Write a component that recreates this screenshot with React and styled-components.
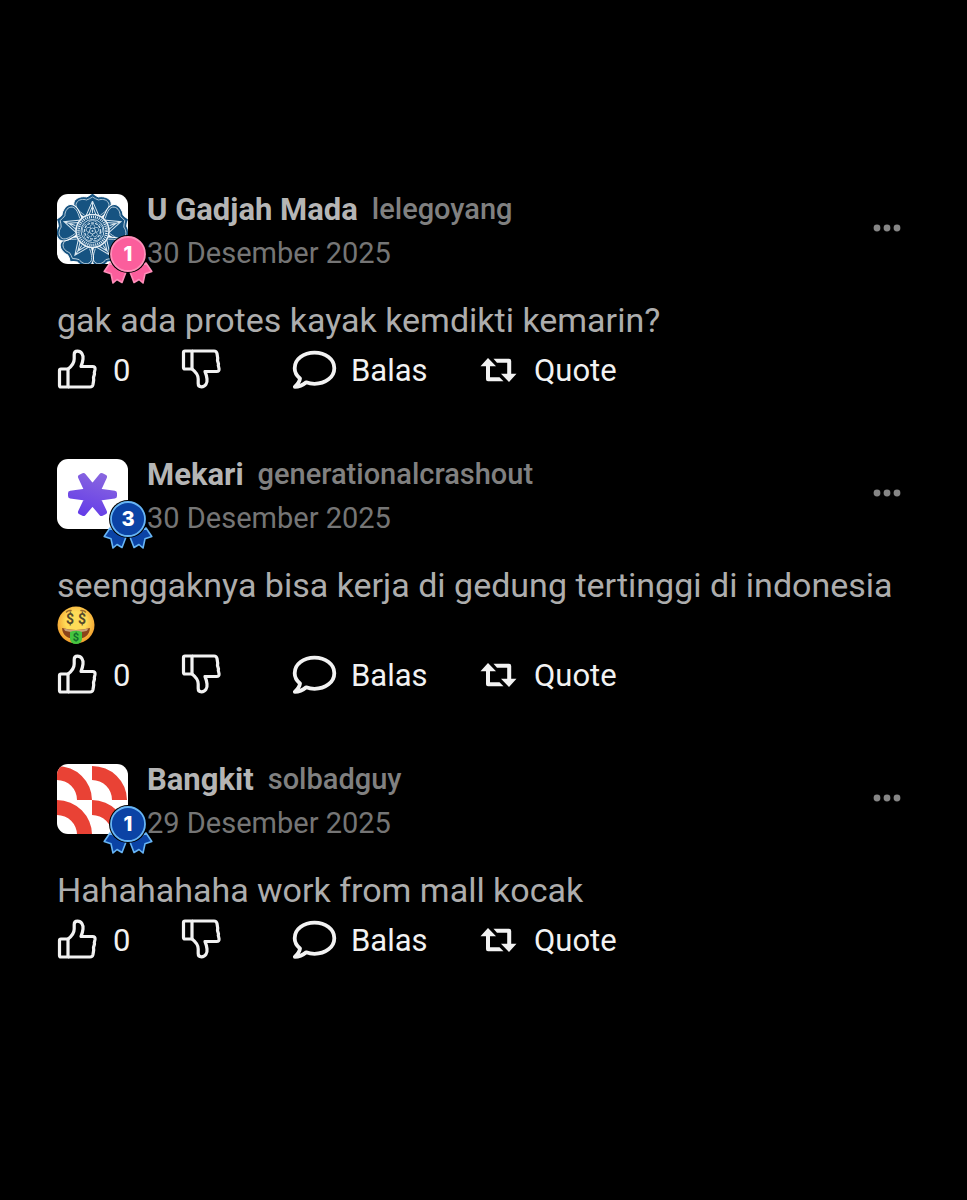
import React from 'react';
import styled, { createGlobalStyle } from 'styled-components';

const GlobalStyle = createGlobalStyle`
  * {
    box-sizing: border-box;
  }
  body {
    margin: 0;
    background: #000;
    font-family: Roboto, 'Noto Sans', sans-serif;
  }
`;

const Page = styled.main`
  min-height: 100vh;
  padding: 194px 57px 60px;
  background: #000;
`;

const Post = styled.article`
  margin-bottom: 58px;
`;

const Header = styled.header`
  display: flex;
  height: 70px;
  margin-bottom: 36px;
`;

const AvatarBox = styled.div`
  position: relative;
  width: 71px;
  height: 70px;
  flex-shrink: 0;
  margin-right: 19px;
`;

const AvatarFrame = styled.div`
  width: 71px;
  height: 70px;
  overflow: hidden;
  border-radius: 11px;
  background: #fff;

  svg {
    display: block;
  }
`;

const BadgeBox = styled.div`
  position: absolute;
  left: 46px;
  top: 41px;
  width: 50px;
  height: 50px;

  svg {
    display: block;
  }
`;

const BadgeNumber = styled.span`
  position: absolute;
  top: 0;
  left: 0;
  width: 50px;
  line-height: 38px;
  text-align: center;
  color: #fff;
  font-family: Inter, sans-serif;
  font-size: 20px;
  font-weight: 800;
`;

const Meta = styled.div`
  flex: 1;
  min-width: 0;
`;

const Names = styled.div`
  display: flex;
  gap: 14px;
  line-height: 32px;
  margin-bottom: 11px;
`;

const Company = styled.strong`
  color: #b5b5b5;
  font-size: 31px;
  font-weight: 700;
`;

const Username = styled.span`
  color: #808080;
  font-size: 29px;
  font-weight: 500;
  line-height: 30px;
`;

const PostDate = styled.time`
  display: block;
  color: #757575;
  font-size: 29px;
  line-height: 32px;
`;

const MoreButton = styled.button`
  align-self: center;
  display: flex;
  padding: 8px 9px 10px;
  border: 0;
  background: none;
  cursor: pointer;
`;

const Body = styled.p`
  margin: 0;
  color: #adadad;
  font-size: 34px;
  line-height: 40px;

  svg {
    display: block;
  }
`;

const Actions = styled.div`
  display: grid;
  grid-template-columns: 124px 111px 188px auto;
  justify-content: start;
  height: 61px;
`;

const ActionButton = styled.button`
  display: flex;
  align-items: center;
  gap: 16px;
  padding: 0;
  border: 0;
  background: none;
  color: #f2f2f2;
  font-family: inherit;
  font-size: 31px;
  line-height: 40px;
  cursor: pointer;
`;

const ThumbIcon = ({ down }) => (
  <svg width="40" height="40" viewBox="0 0 40 40" overflow="visible" fill="none" stroke="#f2f2f2" strokeWidth="3.200" strokeLinejoin="round" aria-hidden="true">
    <g transform={down ? 'matrix(1 0 0 -1 0 38)' : 'translate(0 -2)'}>
      <path d="M4 20H11V38H4Q2.500 38 2.500 36.500V21.500Q2.500 20 4 20Z" />
      <path d="M11 20C15 17 17.200 14 17.200 10V5.500Q17.200 2.200 20.500 2.200C24.500 2.200 26.500 6 26 10Q25.500 14 24 17.500H35.500Q38.500 17.500 38 20.500L37.300 23.500L37.500 25L36.500 28.500L36.700 31L36 35.500Q35.500 38 33 38H11" />
    </g>
  </svg>
);

const ReplyIcon = () => (
  <svg width="43" height="40" viewBox="0 1 43 40" overflow="visible" fill="none" stroke="#f2f2f2" strokeWidth="3.800" strokeLinejoin="round" aria-hidden="true">
    <path d="M8 28.500C4.500 25.500 2.700 22 2.700 18.200C2.700 9.300 11.500 2.700 22.500 2.700S42.300 9.300 42.300 18.200S33.500 33.800 22.500 33.800Q18 33.800 14.200 32.300Q9 36.800 2.800 36.800Q7.500 32.500 8 28.500Z" />
  </svg>
);

const QuoteIcon = () => (
  <svg width="38" height="25" viewBox="1 0 38 25" fill="#f2f2f2" aria-hidden="true">
    <path d="M9 0L17 8.300H11V19.300H20.500L24.500 23.300H9Q7 23.300 7 21.300V8.300H1.500Z" />
    <path d="M14.500 .8H30Q32.200 .8 32.200 3V15.800H37.500L30 24L22 15.800H28.200V4.700H18Z" />
  </svg>
);

const MoneyFace = () => (
  <svg width="38" height="40" viewBox="0 0 38 40" role="img" aria-label="🤑">
    <defs>
      <radialGradient id="face" cx="50%" cy="42%" r="55%">
        <stop offset="0.500" stopColor="#ffdc58" />
        <stop offset="1" stopColor="#f3a02f" />
      </radialGradient>
    </defs>
    <circle cx="19" cy="20" r="18.500" fill="url(#face)" />
    <g fill="none" stroke="#9a6a2b" strokeWidth="1.500" strokeLinecap="round">
      <path d="M9.500 7Q11.500 5 14 5.500" />
      <path d="M24 5.500Q26.500 5 28.500 7" />
    </g>
    <path d="M5 23Q19 27 33 23Q32 34 19 34Q6 34 5 23Z" fill="#8a431b" />
    <path d="M7 23.500Q19 26.500 31 23.500Q31 25 29.500 26Q19 28.500 8.500 26Q7 25 7 23.500Z" fill="#c9a178" />
    <path d="M13 27Q19 24.500 25 27V34Q24.500 39 19 39T13 34Z" fill="#45c43f" />
    <g fill="#54482b" fontFamily="Roboto, sans-serif" fontWeight="700" textAnchor="middle">
      <text x="13" y="19" fontSize="14">$</text>
      <text x="25" y="19" fontSize="14">$</text>
      <text x="19" y="36" fontSize="11" fill="#126b2b">$</text>
    </g>
  </svg>
);

const petals = [0, 72, 144, 216, 288];

const GadjahMadaLogo = () => (
  <svg width="71" height="71" viewBox="0 0 71 71" aria-hidden="true">
    <g transform="translate(35.500 37)">
      {petals.map((angle) => (
        <path key={angle} transform={`rotate(${angle + 36})`} d="M-2.500 -27L0 -32L2.500 -27L0 -20Z" fill="#165381" />
      ))}
      {petals.map((angle) => (
        <g key={angle} transform={`rotate(${angle})`}>
          <path d="M0 0L-9 -14C-15 -19 -20 -23 -18.500 -29C-17 -34 -9 -35 -6 -34Q-3 -35 0 -38Q3 -35 6 -34C9 -35 17 -34 18.500 -29C20 -23 15 -19 9 -14Z" fill="#165381" stroke="#fff" strokeWidth="1" />
          <path d="M-8 -16C-14 -20 -18 -24 -16 -28C-14 -32 -9 -32 -6 -31Q-3 -32 0 -34Q3 -32 6 -31C9 -32 14 -32 16 -28C18 -24 14 -20 8 -16" fill="none" stroke="#bcd2e0" strokeWidth=".9" />
        </g>
      ))}
      {petals.map((angle) => (
        <path key={angle} transform={`rotate(${angle})`} d="M-7 -14L0 -30L7 -14M-4 -15L0 -25L4 -15M0 -29V-18" fill="#165381" stroke="#d8e6ef" strokeWidth="1" />
      ))}
      <circle r="16.500" fill="#165381" stroke="#e4eef5" strokeWidth="1.600" />
      <circle r="14" fill="none" stroke="#e4eef5" strokeWidth="2.600" strokeDasharray="1 1" />
      <circle r="11.500" fill="none" stroke="#c5dae8" strokeWidth="1" />
      <circle r="8" fill="none" stroke="#c5dae8" strokeWidth="1.400" strokeDasharray="3 1" />
      {petals.map((angle) => (
        <g key={angle} transform={`rotate(${angle})`} fill="none" stroke="#c5dae8" strokeWidth=".7">
          <path d="M-5 -8Q0 -13 5 -8" />
          <circle cy="-4" r="2.400" />
        </g>
      ))}
      <circle r="3" fill="#165381" stroke="#c5dae8" strokeWidth=".9" />
      <circle r="1" fill="#c5dae8" />
    </g>
  </svg>
);

const MekariLogo = () => (
  <svg width="71" height="71" viewBox="0 0 71 71" aria-hidden="true">
    <defs>
      <linearGradient id="mekari" gradientUnits="userSpaceOnUse" x1="42" y1="12" x2="27" y2="58">
        <stop offset="0" stopColor="#8a68df" />
        <stop offset="1" stopColor="#633be8" />
      </linearGradient>
    </defs>
    <path
      d="M26.500 16.500L35.500 27.500L44.500 16.500L47.500 18L41 32L57.500 34.200V37L41 39.200L47.500 53L44.500 54.500L35.500 44L26.500 54.500L23.500 53L30 39.200L13.500 37V34.200L30 32L23.500 18Z"
      fill="url(#mekari)"
      stroke="url(#mekari)"
      strokeWidth="5"
      strokeLinejoin="round"
    />
  </svg>
);

const BangkitLogo = () => (
  <svg width="71" height="71" viewBox="0 0 71 71" fill="#e94235" aria-hidden="true">
    <path d="M0 2A35 34 0 0 1 35 36H20A20 20 0 0 0 0 16Z" />
    <path d="M35 2A35 34 0 0 1 70 36H55A20 20 0 0 0 35 16Z" />
    <path d="M0 36A35 35 0 0 1 35 71H20A20 20 0 0 0 0 51Z" />
    <path d="M35 36A35 35 0 0 1 70 71H55A20 20 0 0 0 35 51Z" />
  </svg>
);

const badgeColors = {
  pink: { fill: '#fb5e9c', line: '#ff8fba' },
  blue: { fill: '#0b43a5', line: '#67b5f5' },
};

const Badge = ({ tone, count }) => {
  const { fill, line } = badgeColors[tone];
  return (
    <BadgeBox>
      <svg width="50" height="50" viewBox="0 0 50 50" aria-hidden="true">
        <g fill={fill} stroke={line} strokeWidth="1.600" strokeLinejoin="round">
          <path d="M7 28L1.200 36.500L8 38.800L10 48L14 44.500L19 47.500L23 37Z" />
          <path d="M43 28L48.800 36.500L42 38.800L40 48L36 44.500L31 47.500L27 37Z" />
        </g>
        <circle cx="25" cy="19" r="19" fill="#000" />
        <circle cx="25" cy="19" r="17" fill={fill} stroke={line} strokeWidth="1.800" />
      </svg>
      <BadgeNumber>{count}</BadgeNumber>
    </BadgeBox>
  );
};

const posts = [
  {
    company: 'U Gadjah Mada',
    username: 'lelegoyang',
    date: '30 Desember 2025',
    iso: '2025-12-30',
    logo: <GadjahMadaLogo />,
    tone: 'pink',
    count: 1,
    text: 'gak ada protes kayak kemdikti kemarin?',
  },
  {
    company: 'Mekari',
    username: 'generationalcrashout',
    date: '30 Desember 2025',
    iso: '2025-12-30',
    logo: <MekariLogo />,
    tone: 'blue',
    count: 3,
    text: 'seenggaknya bisa kerja di gedung tertinggi di indonesia',
    emoji: <MoneyFace />,
  },
  {
    company: 'Bangkit',
    username: 'solbadguy',
    date: '29 Desember 2025',
    iso: '2025-12-29',
    logo: <BangkitLogo />,
    tone: 'blue',
    count: 1,
    text: 'Hahahahaha work from mall kocak',
  },
];

const App = () => (
  <>
    <GlobalStyle />
    <Page>
      {posts.map((post) => (
        <Post key={post.username}>
          <Header>
            <AvatarBox>
              <AvatarFrame>{post.logo}</AvatarFrame>
              <Badge tone={post.tone} count={post.count} />
            </AvatarBox>
            <Meta>
              <Names>
                <Company>{post.company}</Company>
                <Username>{post.username}</Username>
              </Names>
              <PostDate dateTime={post.iso}>{post.date}</PostDate>
            </Meta>
            <MoreButton type="button" aria-label="Opsi lainnya">
              <svg width="28" height="8" viewBox="0 0 28 8" fill="#858585" aria-hidden="true">
                <circle cx="4" cy="4" r="3.400" />
                <circle cx="14" cy="4" r="3.400" />
                <circle cx="24" cy="4" r="3.400" />
              </svg>
            </MoreButton>
          </Header>
          <Body>
            {post.text}
            {post.emoji}
          </Body>
          <Actions>
            <ActionButton type="button" aria-label="Suka">
              <ThumbIcon />
              <span>0</span>
            </ActionButton>
            <ActionButton type="button" aria-label="Tidak suka">
              <ThumbIcon down />
            </ActionButton>
            <ActionButton type="button">
              <ReplyIcon />
              Balas
            </ActionButton>
            <ActionButton type="button">
              <QuoteIcon />
              Quote
            </ActionButton>
          </Actions>
        </Post>
      ))}
    </Page>
  </>
);

export default App;
